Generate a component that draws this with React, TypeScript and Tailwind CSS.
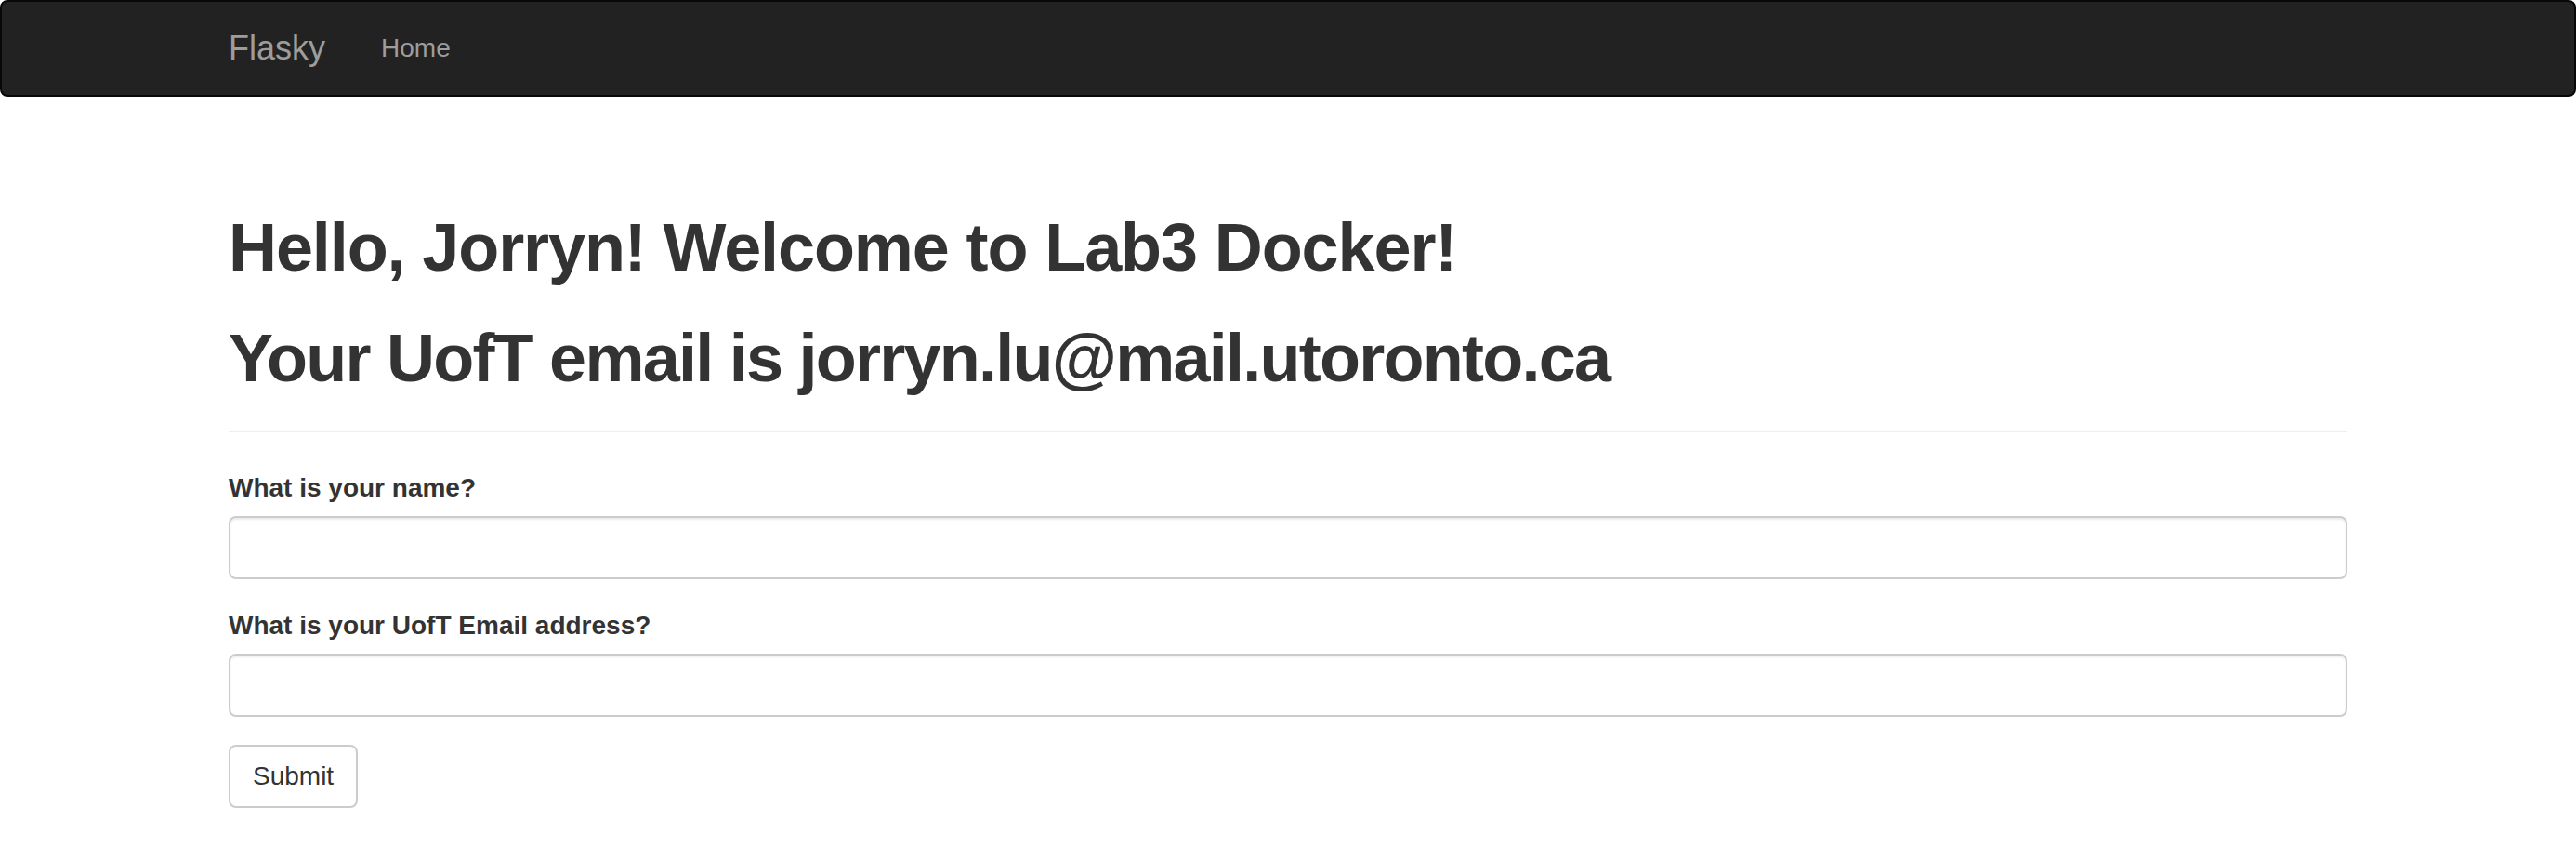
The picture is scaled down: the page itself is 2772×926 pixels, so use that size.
export default function App() {
  return (
    <div className="min-h-screen bg-white font-['Liberation_Sans',Arial,sans-serif] text-[28px] leading-[40px] text-[#333]">
      {/* navbar, scaled 2x from bootstrap 3 defaults */}
      <nav className="mb-[40px] min-h-[100px] rounded-[8px] border-2 border-[#080808] bg-[#222]">
        <div className="mx-auto flex w-[2340px] px-[30px]">
          <a href="#" className="-ml-[30px] block h-[100px] p-[30px] text-[36px] leading-[40px] text-[#9d9d9d]">
            Flasky
          </a>
          <ul className="flex">
            <li>
              <a href="#" className="block px-[30px] py-[30px] leading-[40px] text-[#9d9d9d]">
                Home
              </a>
            </li>
          </ul>
        </div>
      </nav>

      <div className="mx-auto w-[2340px] px-[30px] pt-[83px]">
        <div className="mb-[40px] border-b-2 border-[#eee] pb-[18px]">
          <h1 className="mb-[20px] text-[72px] leading-[1.1] font-bold tracking-[-1.1px]">
            Hello, Jorryn! Welcome to Lab3 Docker!
          </h1>
          <h1 className="mt-[40px] mb-[20px] text-[72px] leading-[1.1] font-bold tracking-[-1.75px]">
            Your UofT email is jorryn.lu@mail.utoronto.ca
          </h1>
        </div>

        <form className="flex flex-col" onSubmit={(e) => e.preventDefault()}>
          <div className="mb-[30px]">
            <label htmlFor="name" className="mb-[10px] block w-fit font-bold">
              What is your name?
            </label>
            <input
              id="name"
              type="text"
              className="block h-[68px] w-full rounded-[8px] border-2 border-[#ccc] bg-white px-[24px] py-[12px] text-[28px] text-[#555] shadow-[inset_0_2px_2px_rgba(0,0,0,0.075)] outline-none"
            />
          </div>
          <div className="mb-[30px]">
            <label htmlFor="email" className="mb-[10px] block w-fit font-bold">
              What is your UofT Email address?
            </label>
            <input
              id="email"
              type="text"
              className="block h-[68px] w-full rounded-[8px] border-2 border-[#ccc] bg-white px-[24px] py-[12px] text-[28px] text-[#555] shadow-[inset_0_2px_2px_rgba(0,0,0,0.075)] outline-none"
            />
          </div>
          <div>
            <button
              type="submit"
              className="rounded-[8px] border-2 border-[#ccc] bg-white px-[24px] py-[12px] text-[28px] leading-[40px] text-[#333]"
            >
              Submit
            </button>
          </div>
        </form>
      </div>
    </div>
  );
}
